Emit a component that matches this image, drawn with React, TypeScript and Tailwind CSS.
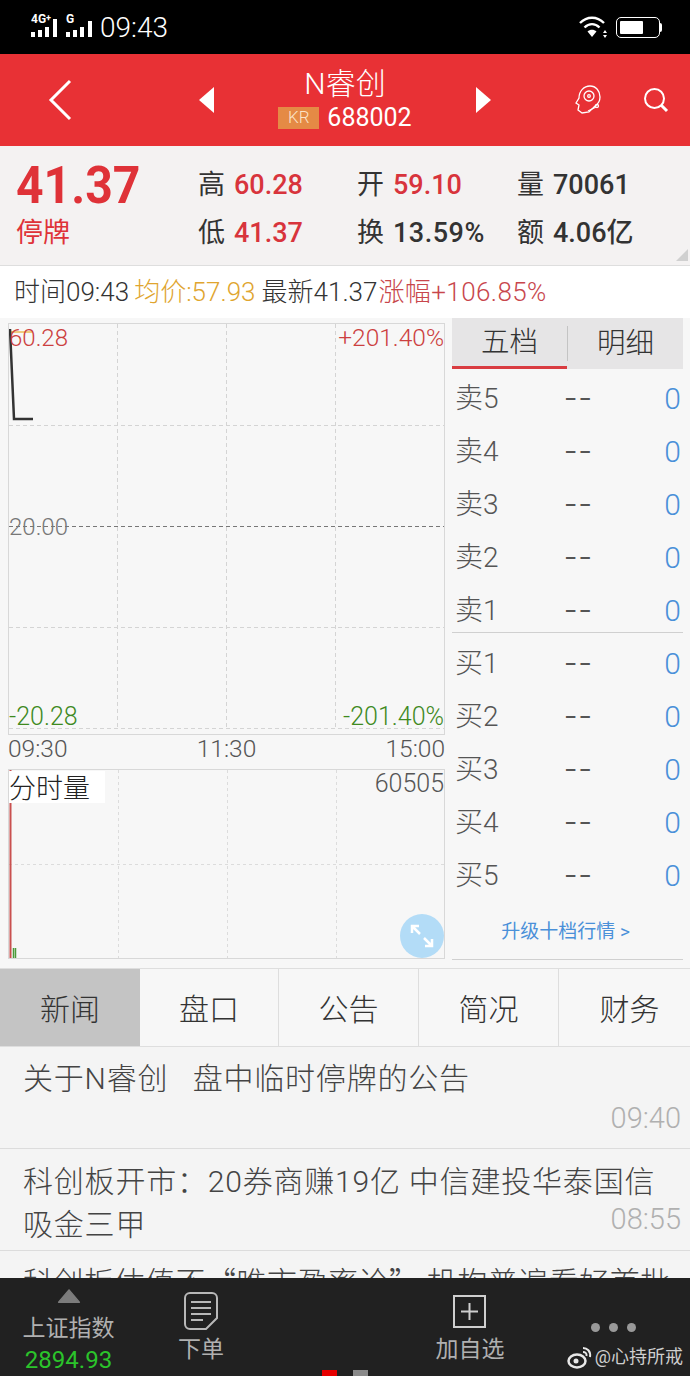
import React from 'react';

const font = { fontFamily: 'Roboto, "Noto Sans CJK SC", sans-serif' };
const cjkFont = { fontFamily: '"Noto Sans CJK SC", Roboto, sans-serif' };

const asks = ['卖5', '卖4', '卖3', '卖2', '卖1'];
const bids = ['买1', '买2', '买3', '买4', '买5'];
const tabs = [
  { label: '新闻', className: 'w-[140px] bg-[#c4c4c4]' },
  { label: '盘口', className: 'w-[139px] border-r border-[#dedede]' },
  { label: '公告', className: 'w-[140px] border-r border-[#dedede]' },
  { label: '简况', className: 'w-[140px] border-r border-[#dedede]' },
  { label: '财务', className: 'flex-1 pl-[10px]' },
];

function StatusBar() {
  return (
    <div className="h-[54px] bg-black flex items-center justify-between pl-[31px] pr-[30px] text-white">
      <div className="flex items-center">
        <svg width="65" height="30" viewBox="0 -2 65 30" fill="#fff">
          <text x="0" y="9" fontSize="12" fontWeight="700" fontFamily="Roboto">4G</text>
          <text x="15" y="7" fontSize="9" fontWeight="700" fontFamily="Roboto">+</text>
          <text x="35" y="9" fontSize="12" fontWeight="700" fontFamily="Roboto">G</text>
          <rect x="0" y="18" width="4" height="5" />
          <rect x="7" y="16" width="4" height="7" />
          <rect x="14" y="13" width="4" height="10" />
          <rect x="22" y="5" width="4" height="18" />
          <rect x="35" y="18" width="4" height="5" />
          <rect x="42" y="16" width="4" height="7" />
          <rect x="49" y="13" width="4" height="10" />
          <rect x="57" y="7" width="4" height="16" />
        </svg>
        <span className="text-[28px] ml-[4px] leading-none font-light mt-[2px]" style={font}>09:43</span>
      </div>
      <div className="flex items-center gap-[8px]">
        <svg width="30" height="24" viewBox="0 0 30 24" fill="none" stroke="#fff" strokeWidth="2.400">
          <path d="M2 8C9 1 19 1 26 8" />
          <path d="M6.500 12.500C11 8 17 8 21.500 12.500" />
          <path d="M14 22l-4.500-5.500C12 14 16 14 18.500 16.500z" fill="#fff" stroke="none" />
          <path d="M27 15l2 3h-4zM27 23l2-3h-4z" fill="#fff" stroke="none" />
        </svg>
        <div className="w-[44px] h-[21px] border border-white rounded-[5px] p-[3px] relative">
          <div className="w-[23px] h-full bg-white rounded-[1px]" />
          <div className="absolute right-[-3px] top-[5px] w-[2px] h-[9px] bg-white rounded-r" />
        </div>
      </div>
    </div>
  );
}

function Header() {
  return (
    <div className="h-[92px] bg-[#e83135] relative flex items-center text-white" style={font}>
      <svg className="ml-[47px]" width="28" height="44" viewBox="0 0 28 44" fill="none" stroke="#fff" strokeWidth="3">
        <path d="M23 3L4 22l19 19" />
      </svg>
      <svg className="ml-[123px]" width="18" height="26" viewBox="0 0 18 26" fill="#fff">
        <path d="M16 0v26L1 13z" />
      </svg>
      <div className="w-[258px] flex flex-col items-center">
        <div className="text-[30px] leading-[34px] mt-[-2px] font-light">N睿创</div>
        <div className="flex items-center mt-[3px]">
          <span className="w-[41px] h-[22px] bg-[#e58a45] text-[#fbe3c9] text-[17px] font-light flex items-center justify-center">KR</span>
          <span className="text-[25px] leading-[28px] ml-[8px]">688002</span>
        </div>
      </div>
      <svg width="18" height="26" viewBox="0 0 18 26" fill="#fff">
        <path d="M2 0v26L17 13z" />
      </svg>
      <svg className="ml-[82px]" width="28" height="30" viewBox="0 0 28 30" fill="none" stroke="#fff" strokeWidth="1.300">
        <path d="M8 28L4 25l1-5-3-2 3-5C5 6 10 1 16 1c6 0 10 5 10 11 0 4-2 7-5 9l-6 6z" />
        <circle cx="15" cy="11" r="5" />
        <circle cx="15" cy="11" r="1.300" />
        <path d="M14 26l8-4" />
        <circle cx="23" cy="21" r="1.500" />
      </svg>
      <svg className="ml-[41px]" width="26" height="26" viewBox="0 0 26 26" fill="none" stroke="#fff" strokeWidth="2">
        <circle cx="11.500" cy="11.500" r="9.500" />
        <path d="M18 18l6 6" strokeWidth="3" />
      </svg>
    </div>
  );
}

function Quote() {
  const cell = 'flex items-baseline leading-none';
  return (
    <div className="h-[120px] bg-[#f4f2f2] border-b border-[#dedede] relative" style={font}>
      <div className="flex">
        <div className="w-[198px] pl-[16px] pt-[14px]">
          <div className="text-[52px] leading-[52px] font-bold text-[#df3238] origin-left scale-x-[0.925]">41.37</div>
          <div className="text-[27px] leading-[36px] mt-[3px] text-[#df3238]">停牌</div>
        </div>
        <div className="grid grid-cols-[159px_160px_auto] gap-y-[17px] pt-[26px] text-[27px] text-[#333]">
          <div className={cell}>高<span className="ml-[9px] font-medium text-[#d8343c]">60.28</span></div>
          <div className={cell}>开<span className="ml-[9px] font-medium text-[#d8343c]">59.10</span></div>
          <div className={cell}>量<span className="ml-[9px] font-medium">70061</span></div>
          <div className={cell}>低<span className="ml-[9px] font-medium text-[#d8343c]">41.37</span></div>
          <div className={cell}>换<span className="ml-[9px] font-medium tracking-[0.500px]">13.59%</span></div>
          <div className={cell}>额<span className="ml-[9px] font-medium">4.06亿</span></div>
        </div>
      </div>
      <svg className="absolute right-[2px] bottom-[4px]" width="12" height="12" viewBox="0 0 12 12" fill="#d0d0d0">
        <path d="M12 0v12H0z" />
      </svg>
    </div>
  );
}

function InfoBar() {
  return (
    <div className="h-[52px] bg-white flex items-center pl-[14px] pt-[1px] text-[26px] font-light text-[#333]" style={font}>
      <span>时间09:43</span>
      <span className="ml-[5px] text-[#e0a52f]">均价:57.93</span>
      <span className="ml-[6px]">最新41.37</span>
      <span className="ml-[1px] tracking-[0.400px] text-[#c8464c]">涨幅+106.85%</span>
    </div>
  );
}

function Charts() {
  return (
    <div className="w-[437px] ml-[8px] mt-[5px]" style={font}>
      <div className="relative h-[412px] bg-[#f7f7f7] border border-[#d8d8d8]">
        <svg className="absolute inset-0" width="435" height="410" viewBox="0 0 435 410" fill="none">
          <g stroke="#d4d4d4" strokeDasharray="4 3">
            <path d="M108.500 0V404M217.500 0V404M326.500 0V404" />
            <path d="M0 101.500H435M0 303.500H435M0 404.500H435" />
          </g>
          <path d="M0 202.500H435" stroke="#777" strokeDasharray="4 3" />
          <path d="M1 8H24" stroke="#eebb55" strokeWidth="1.500" />
          <path d="M1 5L5 95H24" stroke="#333" strokeWidth="2.500" />
        </svg>
        <span className="absolute left-0 top-0 text-[24px] leading-[28px] font-light text-[#cc4040]">60.28</span>
        <span className="absolute right-0 top-0 text-[24.500px] leading-[28px] font-light text-[#cc4040]">+201.40%</span>
        <span className="absolute left-0 top-[189px] text-[24px] leading-[28px] font-light text-[#777]">20.00</span>
        <span className="absolute left-0 top-[379px] text-[25px] leading-[28px] font-light text-[#3f8a1f]">-20.28</span>
        <span className="absolute right-0 top-[379px] text-[25px] leading-[28px] font-light text-[#3f8a1f]">-201.40%</span>
      </div>
      <div className="h-[34px] flex justify-between items-start text-[24.500px] leading-[28px] font-light text-[#555]">
        <span>09:30</span>
        <span>11:30</span>
        <span>15:00</span>
      </div>
      <div className="relative h-[190px] bg-[#f7f7f7] border border-[#d8d8d8]">
        <svg className="absolute inset-0" width="435" height="188" viewBox="0 0 435 188" fill="none">
          <g stroke="#dcdcdc" strokeDasharray="3 3">
            <path d="M109.500 0V188M218.500 0V188M327.500 0V188" />
            <path d="M0 94.500H435" />
          </g>
          <path d="M1.500 0V188" stroke="#c9504f" strokeWidth="2" />
          <path d="M4.500 178V188M6.500 178V188" stroke="#4a9a3a" strokeWidth="1.500" />
        </svg>
        <span className="absolute left-0 top-[1px] w-[96px] h-[32px] bg-white text-[27px] leading-[36px] font-light text-[#222]">分时量</span>
        <span className="absolute right-0 top-0 text-[25px] leading-[28px] font-light text-[#555]">60505</span>
        <div className="absolute right-0 bottom-0 w-[44px] h-[44px] rounded-full bg-[#b3dcf7] flex items-center justify-center">
          <svg width="26" height="26" viewBox="0 0 26 26" fill="none" stroke="#fff" strokeWidth="2.500">
            <path d="M3 10V3h7M3 3l8 8M23 16v7h-7M23 23l-8-8" />
          </svg>
        </div>
      </div>
    </div>
  );
}

function Row({ label }: { label: string }) {
  return (
    <div className="h-[40px] flex items-center text-[#555] pl-[3px]">
      <span className="w-[110px] text-[28px] font-light">{label}</span>
      <span className="flex-1 text-[40px] leading-[40px] font-light tracking-[3px]">--</span>
      <span className="text-[30px] leading-[38px] font-light text-[#4a90d9] pr-[2px]">0</span>
    </div>
  );
}

function OrderBook() {
  return (
    <div className="w-[231px] ml-[7px]" style={font}>
      <div className="h-[51px] bg-[#e6e5e6] flex text-[28.500px] font-light text-[#333]">
        <div className="w-[115px] flex items-center justify-center border-b-[3px] border-[#d93c41] pt-[3px]">五档</div>
        <div className="flex-1 my-[8px] pt-[2px] border-l border-[#c4c4c4] flex items-center justify-center">明细</div>
      </div>
      <div className="h-[264px] border-b border-[#d0d0d0] pt-[10px] flex flex-col gap-[13px]">
        {asks.map((a) => <Row key={a} label={a} />)}
      </div>
      <div className="pt-[11px] flex flex-col gap-[13px]">
        {bids.map((b) => <Row key={b} label={b} />)}
      </div>
      <div className="h-[64px] pt-[9px] pr-[4px] flex items-center justify-center text-[19px] text-[#4a90d9] border-b border-[#d0d0d0]">升级十档行情 &gt;</div>
    </div>
  );
}

function Tabs() {
  return (
    <div className="h-[79px] flex bg-[#f7f7f7] border-t border-b border-[#dedede]" style={font}>
      {tabs.map((t) => (
        <div
          key={t.label}
          className={`${t.className} pt-[3px] flex items-center justify-center text-[30px] font-light text-[#333]`}
        >
          {t.label}
        </div>
      ))}
    </div>
  );
}

function News() {
  return (
    <div className="h-[231px] overflow-hidden bg-[#f4f4f4] text-[#444] font-light" style={font}>
      <div className="h-[102px] border-b border-[#dcdcdc] pl-[23px] pr-[9px] pt-[13px]">
        <div className="text-[30px] tracking-[0.800px] leading-[38px] whitespace-nowrap">关于N睿创&nbsp;&nbsp;&nbsp;盘中临时停牌的公告</div>
        <div className="text-right text-[29px] leading-[32px] mt-[4px] text-[#b0b0b0]">09:40</div>
      </div>
      <div className="h-[102px] border-b border-[#dcdcdc] pl-[23px] pr-[9px] pt-[11px]">
        <div className="text-[30px] tracking-[0.800px] leading-[44px] whitespace-nowrap">科创板开市：20券商赚19亿 中信建投华泰国信</div>
        <div className="flex justify-between items-start">
          <span className="text-[30px] tracking-[0.800px] leading-[42px]">吸金三甲</span>
          <span className="text-[29px] leading-[30px] text-[#b0b0b0]">08:55</span>
        </div>
      </div>
      <div className="pl-[23px] pt-[9px] text-[30px] tracking-[0.500px] leading-[40px] whitespace-nowrap" style={cjkFont}>科创板估值不“唯市盈率论” 机构普遍看好首批</div>
    </div>
  );
}

function BottomBar() {
  return (
    <div className="h-[98px] bg-[#212121] relative flex text-[#b0b0b0]" style={font}>
      <div className="w-[137px] flex flex-col items-center pt-[10px]">
        <svg width="26" height="18" viewBox="0 0 26 18" fill="#7c7c7c" stroke="#7c7c7c" strokeWidth="1.500" strokeLinejoin="round">
          <path d="M13 2l11 13H2z" />
        </svg>
        <span className="text-[23px] leading-[34px] mt-[7px]">上证指数</span>
        <span className="text-[24px] leading-[32px] mt-[-2px] text-[#2bc42b]">2894.93</span>
      </div>
      <div className="w-[128px] flex flex-col items-center pt-[14px]">
        <svg width="34" height="38" viewBox="0 0 34 38" fill="none" stroke="#b8b8b8" strokeWidth="2">
          <path d="M6 1h22a5 5 0 0 1 5 5v20L22 37H6a5 5 0 0 1-5-5V6a5 5 0 0 1 5-5z" />
          <path d="M7 10h20M7 16h20M7 22h20M7 28h12" />
        </svg>
        <span className="text-[23px] leading-[34px] mt-[3px]">下单</span>
      </div>
      <div className="w-[142px]" />
      <div className="w-[126px] flex flex-col items-center pt-[17px]">
        <svg width="34" height="34" viewBox="0 0 34 34" fill="none" stroke="#cfcfcf" strokeWidth="2">
          <rect x="1" y="1" width="31" height="31" />
          <path d="M16.500 8v17M8 16.500h17" />
        </svg>
        <span className="text-[23px] leading-[34px] mt-[4px]">加自选</span>
      </div>
      <div className="flex-1 flex justify-center gap-[9px] pt-[45px] pl-[3px]">
        <i className="w-[9px] h-[9px] rounded-full bg-[#999]" />
        <i className="w-[9px] h-[9px] rounded-full bg-[#999]" />
        <i className="w-[9px] h-[9px] rounded-full bg-[#999]" />
      </div>
      <div className="absolute left-[322px] bottom-0 flex gap-[16px]">
        <i className="w-[15px] h-[6px] bg-[#e60000]" />
        <i className="w-[15px] h-[6px] bg-[#8a8a8a]" />
      </div>
      <div className="absolute right-[7px] bottom-[6px] flex items-center text-[18px] text-[#cfcfcf]">
        <svg width="26" height="24" viewBox="0 0 26 24" fill="none" stroke="#e8e8e8" strokeWidth="2.500">
          <ellipse cx="10" cy="16" rx="8.500" ry="6.500" />
          <circle cx="9" cy="16" r="2.500" fill="#e8e8e8" stroke="none" />
          <path d="M16 3c4 0 8 3 7 9M16 7c2 0 4 1 3.500 4" strokeWidth="2" />
        </svg>
        <span className="ml-[2px]">@心持所戒</span>
      </div>
    </div>
  );
}

export default function App() {
  return (
    <div className="w-[690px] h-[1376px] overflow-hidden bg-[#f7f7f7]">
      <StatusBar />
      <Header />
      <Quote />
      <InfoBar />
      <div className="h-[650px] flex bg-[#f7f7f7]">
        <Charts />
        <OrderBook />
      </div>
      <Tabs />
      <News />
      <BottomBar />
    </div>
  );
}
